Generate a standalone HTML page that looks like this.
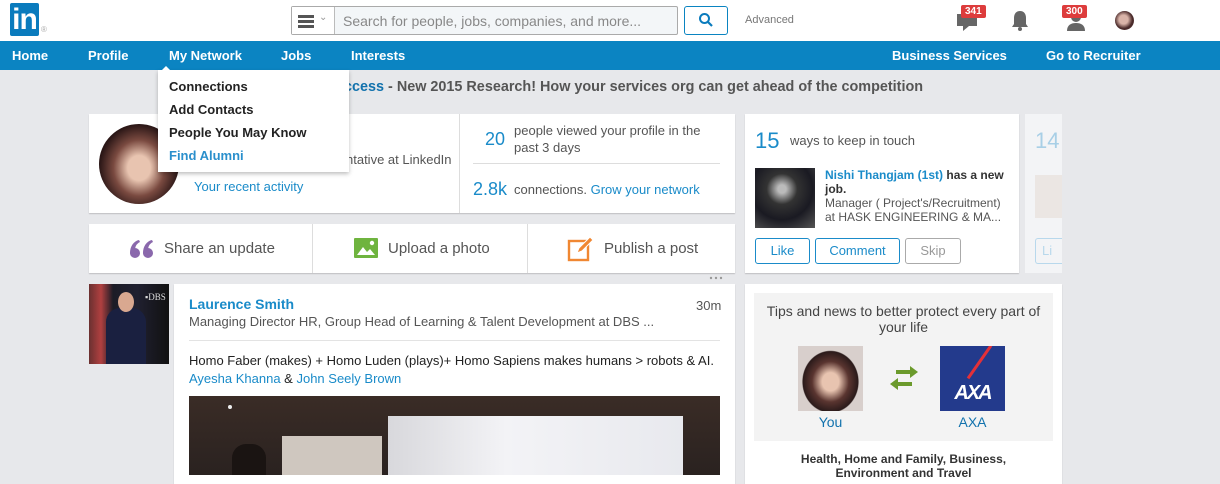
<!DOCTYPE html>
<html><head><meta charset="utf-8"><style>
*{margin:0;padding:0;box-sizing:border-box}
body{width:1220px;height:475px;overflow:hidden;background:#e7e8eb;font-family:"Liberation Sans",Arial,sans-serif;position:relative;color:#333}
.a{position:absolute}
.blue{color:#1a8bc9}
.card{background:#fff;box-shadow:0 1px 1px rgba(0,0,0,.18)}
</style></head><body>
<!-- header -->
<div class="a" style="left:0;top:0;width:1220px;height:41px;background:#fff"></div>
<div class="a" style="left:10px;top:3px;width:29px;height:33px;background:#0a7bbd;border-radius:2px;color:#fff;font-weight:bold;font-size:30px;line-height:33px;text-align:center;letter-spacing:-1px">in</div>
<div class="a" style="left:41px;top:25px;font-size:8px;color:#aaa">®</div>
<div class="a" style="left:291px;top:6px;width:387px;height:29px;border:1px solid #aaa;border-radius:2px;background:#f3f6f8"></div>
<div class="a" style="left:292px;top:7px;width:43px;height:27px;background:#fff;border-right:1px solid #bbb"></div>
<div class="a" style="left:298px;top:15px;width:16px;height:3px;background:#555;box-shadow:0 5px 0 #555,0 10px 0 #555"></div>
<div class="a" style="left:319px;top:12px;font-size:10px;color:#999">⌄</div>
<div class="a" style="left:343px;top:13px;font-size:14px;color:#888">Search for people, jobs, companies, and more...</div>
<div class="a" style="left:684px;top:6px;width:44px;height:29px;border:1px solid #0a84c1;border-radius:3px;background:#fff"></div>
<svg class="a" style="left:698px;top:12px" width="16" height="16"><circle cx="6.5" cy="6.5" r="4.5" fill="none" stroke="#0a7bbd" stroke-width="2"/><line x1="10" y1="10" x2="14" y2="14" stroke="#0a7bbd" stroke-width="2.2"/></svg>
<div class="a" style="left:745px;top:14px;font-size:11px;color:#777">Advanced</div>
<svg class="a" style="left:955px;top:10px" width="24" height="22"><path d="M2 4h20v12h-8l-6 5v-5H2z" fill="#666"/></svg>
<div class="a" style="left:961px;top:5px;background:#dd3c3c;color:#fff;font-size:10px;font-weight:bold;padding:0 4px;border-radius:2px;line-height:13px">341</div>
<svg class="a" style="left:1010px;top:10px" width="20" height="22"><path d="M10 1c4 0 6 3 6 7v6l2 3H2l2-3V8c0-4 2-7 6-7z" fill="#666"/><circle cx="10" cy="19" r="2" fill="#666"/></svg>
<svg class="a" style="left:1064px;top:10px" width="24" height="22"><circle cx="12" cy="7" r="5" fill="#666"/><path d="M3 21c0-6 4-8 9-8s9 2 9 8z" fill="#666"/></svg>
<div class="a" style="left:1062px;top:5px;background:#dd3c3c;color:#fff;font-size:10px;font-weight:bold;padding:0 4px;border-radius:2px;line-height:13px">300</div>
<div class="a" style="left:1115px;top:11px;width:19px;height:19px;border-radius:50%;background:radial-gradient(circle at 45% 45%,#d9b3a8 30%,#4a2a2a 60%)"></div>
<!-- nav -->
<div class="a" style="left:0;top:41px;width:1220px;height:29px;background:#0b84c2"></div>
<div class="a" style="top:48px;left:0;width:1220px;color:#fff;font-weight:bold;font-size:13px">
<span class="a" style="left:12px">Home</span><span class="a" style="left:88px">Profile</span><span class="a" style="left:169px">My Network</span><span class="a" style="left:281px">Jobs</span><span class="a" style="left:351px">Interests</span><span class="a" style="left:892px">Business Services</span><span class="a" style="left:1046px">Go to Recruiter</span></div>
<!-- banner -->
<div class="a" style="left:344px;top:79px;font-size:14.4px;font-weight:bold;color:#555"><span style="color:#1272ad">ccess</span> - New 2015 Research! How your services org can get ahead of the competition</div>
<!-- profile card -->
<div class="a card" style="left:89px;top:114px;width:646px;height:99px"></div>
<div class="a" style="left:459px;top:114px;width:1px;height:99px;background:#ddd"></div>
<div class="a" style="left:99px;top:124px;width:80px;height:80px;border-radius:50%;background:radial-gradient(ellipse at 50% 55%,#e8c4b0 20%,#7a4a40 45%,#2a1616 70%),#333"></div>
<div class="a" style="left:346px;top:152px;font-size:13px;color:#555">ntative at LinkedIn</div>
<div class="a blue" style="left:194px;top:179px;font-size:13px">Your recent activity</div>
<div class="a blue" style="left:485px;top:129px;font-size:18px">20</div>
<div class="a" style="left:514px;top:122px;font-size:13px;color:#555;line-height:17px">people viewed your profile in the<br>past 3 days</div>
<div class="a" style="left:473px;top:163px;width:247px;height:1px;background:#ddd"></div>
<div class="a blue" style="left:473px;top:179px;font-size:18px">2.8k</div>
<div class="a" style="left:514px;top:182px;font-size:13px;color:#555">connections. <span class="blue">Grow your network</span></div>
<!-- dropdown -->
<div class="a" style="left:158px;top:70px;width:191px;height:102px;background:#fff;box-shadow:0 2px 4px rgba(0,0,0,.25)"></div>
<div class="a" style="left:157px;top:61px;width:0;height:0;border:5px solid transparent;border-bottom-color:#fff;left:161px"></div>
<div class="a" style="left:169px;top:75px;font-size:13px;font-weight:bold;color:#222;line-height:23px">Connections<br>Add Contacts<br>People You May Know<br><span style="color:#2a8fcc">Find Alumni</span></div>
<!-- share bar -->
<div class="a card" style="left:89px;top:224px;width:646px;height:49px"></div>
<div class="a" style="left:312px;top:224px;width:1px;height:49px;background:#ddd"></div>
<div class="a" style="left:527px;top:224px;width:1px;height:49px;background:#ddd"></div>
<svg class="a" style="left:129px;top:239px" width="26" height="20"><circle cx="6" cy="14" r="5" fill="#8a68ac"/><path d="M1 14C1 7 5 2 10 1l1 2C7 5 6 8 6 12z" fill="#8a68ac"/><circle cx="19" cy="14" r="5" fill="#8a68ac"/><path d="M14 14C14 7 18 2 23 1l1 2C20 5 19 8 19 12z" fill="#8a68ac"/></svg>
<div class="a" style="left:164px;top:240px;font-size:15px;color:#555">Share an update</div>
<div class="a" style="left:354px;top:238px;width:24px;height:20px;background:#6fb43f;border-radius:1px"></div>
<svg class="a" style="left:354px;top:238px" width="24" height="20"><path d="M3 17l6-8 4 5 3-3 5 6z" fill="#fff"/><circle cx="18" cy="5" r="2.2" fill="#fff"/></svg>
<div class="a" style="left:388px;top:240px;font-size:15px;color:#555">Upload a photo</div>
<svg class="a" style="left:567px;top:236px" width="28" height="26"><rect x="2" y="5" width="19" height="19" fill="none" stroke="#f08732" stroke-width="2.4"/><path d="M10 17l2-5 11-11 3 3-11 11z" fill="#f08732" stroke="#fff" stroke-width="1"/></svg>
<div class="a" style="left:604px;top:240px;font-size:15px;color:#555">Publish a post</div>
<svg class="a" style="left:709px;top:276px" width="14" height="4"><circle cx="2" cy="2" r="1.2" fill="#999"/><circle cx="7" cy="2" r="1.2" fill="#999"/><circle cx="12" cy="2" r="1.2" fill="#999"/></svg>
<!-- feed -->
<div class="a" style="left:89px;top:284px;width:80px;height:80px;background:linear-gradient(90deg,#6a3030 0,#b04040 15%,#1c1c26 30%,#202030 60%,#111 100%)"></div>
<div class="a" style="left:106px;top:308px;width:40px;height:56px;background:#1a2040;border-radius:14px 14px 0 0"></div>
<div class="a" style="left:118px;top:292px;width:16px;height:20px;background:#d9a890;border-radius:50%"></div>
<div class="a" style="left:145px;top:292px;font-size:9px;color:#ddd;font-family:'Liberation Serif',serif">▪DBS</div>
<div class="a card" style="left:174px;top:284px;width:561px;height:200px"></div>
<div class="a blue" style="left:189px;top:296px;font-size:14px;font-weight:bold">Laurence Smith</div>
<div class="a" style="left:696px;top:298px;font-size:13px;color:#555">30m</div>
<div class="a" style="left:189px;top:314px;font-size:13px;color:#555">Managing Director HR, Group Head of Learning &amp; Talent Development at DBS ...</div>
<div class="a" style="left:189px;top:340px;width:531px;height:1px;background:#e3e3e3"></div>
<div class="a" style="left:189px;top:352px;font-size:13px;color:#222;line-height:18px;white-space:nowrap">Homo Faber (makes) + Homo Luden (plays)+ Homo Sapiens makes humans &gt; robots &amp; AI.<br><span class="blue">Ayesha Khanna</span> &amp; <span class="blue">John Seely Brown</span></div>
<div class="a" style="left:189px;top:396px;width:531px;height:79px;background:linear-gradient(180deg,#3a2c26,#2a2220)"></div>
<div class="a" style="left:228px;top:405px;width:4px;height:4px;background:#eee;border-radius:50%"></div>
<div class="a" style="left:388px;top:416px;width:295px;height:59px;background:linear-gradient(90deg,#d8d8dc,#f3f3f6 40%,#e8e9ee)"></div>
<div class="a" style="left:282px;top:436px;width:100px;height:39px;background:#cfc7bf"></div>
<div class="a" style="left:232px;top:444px;width:34px;height:31px;background:#1a1412;border-radius:14px 14px 0 0"></div>
<!-- right card -->
<div class="a card" style="left:745px;top:114px;width:274px;height:159px"></div>
<div class="a blue" style="left:755px;top:128px;font-size:22px">15</div>
<div class="a" style="left:790px;top:133px;font-size:13px;color:#555">ways to keep in touch</div>
<div class="a" style="left:755px;top:168px;width:60px;height:60px;background:radial-gradient(circle at 45% 35%,#bbb 8%,#333 30%,#1a1a22 60%,#555 100%)"></div>
<div class="a" style="left:825px;top:168px;font-size:12px;line-height:14px;color:#555;width:190px"><b class="blue">Nishi Thangjam (1st)</b> <b style="color:#333">has a new job.</b><br>Manager ( Project's/Recruitment)<br>at HASK ENGINEERING &amp; MA...</div>
<div class="a" style="left:755px;top:238px;width:55px;height:26px;border:1px solid #1a8bc9;border-radius:3px;color:#1a8bc9;font-size:13px;text-align:center;line-height:24px">Like</div>
<div class="a" style="left:815px;top:238px;width:85px;height:26px;border:1px solid #1a8bc9;border-radius:3px;color:#1a8bc9;font-size:13px;text-align:center;line-height:24px">Comment</div>
<div class="a" style="left:905px;top:238px;width:56px;height:26px;border:1px solid #aaa;border-radius:3px;color:#999;font-size:13px;text-align:center;line-height:24px">Skip</div>
<div class="a" style="left:1025px;top:114px;width:37px;height:159px;background:#f3f4f6"></div>
<div class="a" style="left:1035px;top:128px;font-size:22px;color:#a8cfe6">14</div>
<div class="a" style="left:1035px;top:175px;width:27px;height:43px;background:#ebe6e3"></div>
<div class="a" style="left:1035px;top:238px;width:27px;height:26px;border:1px solid #b8d8ec;border-right:none;border-radius:3px 0 0 3px;color:#b8d8ec;font-size:13px;line-height:24px;padding-left:6px;overflow:hidden">Li</div>
<!-- ad card -->
<div class="a card" style="left:745px;top:284px;width:317px;height:200px"></div>
<div class="a" style="left:754px;top:293px;width:299px;height:148px;background:#f3f3f3"></div>
<div class="a" style="left:754px;top:303px;width:299px;text-align:center;font-size:14px;color:#444;line-height:16px">Tips and news to better protect every part of<br>your life</div>
<div class="a" style="left:798px;top:346px;width:65px;height:65px;background:radial-gradient(ellipse at 50% 55%,#e8c4b0 18%,#5a3530 40%,#2a1a1a 60%,#d8cfcc 62%)"></div>
<div class="a" style="left:940px;top:346px;width:65px;height:65px;background:#233a8c;overflow:hidden"><div class="a" style="left:38px;top:-4px;width:3px;height:40px;background:#e43038;transform:rotate(35deg)"></div><div class="a" style="left:0;top:36px;width:65px;text-align:center;color:#fff;font-weight:bold;font-size:20px;font-style:italic;letter-spacing:-2px">AXA</div></div>
<svg class="a" style="left:887px;top:365px" width="34" height="30"><path d="M9 5h14V1l8 6-8 6V9H9z" fill="#6b9a2c"/><path d="M25 17H11v-4l-8 6 8 6v-4h14z" fill="#6b9a2c"/></svg>
<div class="a" style="left:798px;top:414px;width:65px;text-align:center;font-size:14px;color:#1272ad">You</div>
<div class="a" style="left:940px;top:414px;width:65px;text-align:center;font-size:14px;color:#1272ad">AXA</div>
<div class="a" style="left:754px;top:452px;width:299px;text-align:center;font-size:12px;font-weight:bold;color:#333;line-height:14px">Health, Home and Family, Business,<br>Environment and Travel</div>
</body></html>
